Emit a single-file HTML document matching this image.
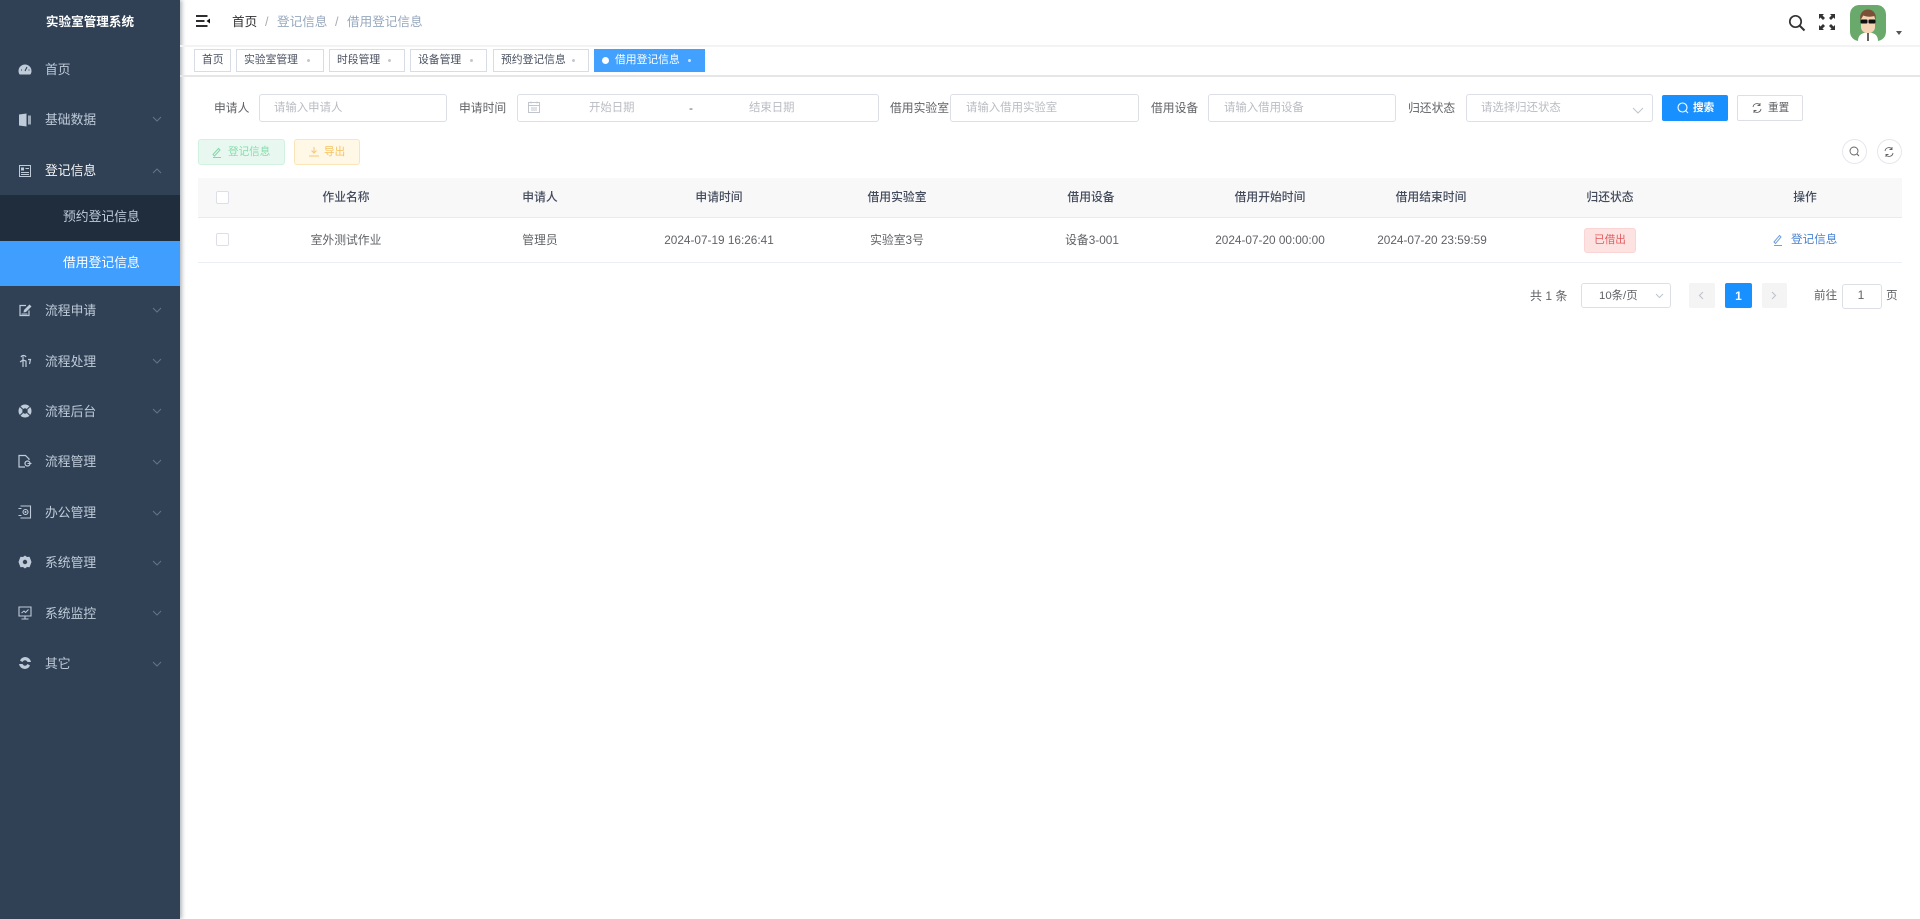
<!DOCTYPE html>
<html lang="zh-CN"><head><meta charset="utf-8"><title>实验室管理系统</title>
<style>
*{box-sizing:border-box}
html,body{margin:0;padding:0;width:1920px;height:919px;overflow:hidden;background:#fff;font-family:"Liberation Sans","Noto Sans CJK SC",sans-serif;font-size:12px;color:#606266}
.a,.t,.c,svg.i{position:absolute}
.t,.c{white-space:nowrap;line-height:18px;margin-top:-9px}
.c{transform:translateX(-50%)}
#side{left:0;top:0;width:180px;height:919px;background:#304156;box-shadow:2px 0 4px rgba(0,21,41,.3)}
.m{font-size:12.8px;color:#bfcbd9;left:45px}
.ic{left:18px;width:14px;height:14px;fill:#bfcbd9}
.ch{left:152px;width:10px;height:6px;fill:none;stroke:#64748a;stroke-width:1}
.box{position:absolute;border:1px solid #dcdfe6;border-radius:3px;background:#fff}
.tag{position:absolute;top:49px;height:23px;border:1px solid #d8dce5;background:#fff;color:#495060;font-size:10.8px;line-height:21px;padding-left:7px;white-space:nowrap}
.tag i{position:absolute;right:13px;top:9px;width:3px;height:3px;border-radius:50%;background:#c4c8ce}
.ph{color:#b9bcc3;font-size:11.4px}
.lb{color:#606266;font-size:11.8px}
.th{font-size:11.8px;color:#434b5c;font-weight:500}
.td{font-size:11.8px;color:#606266}
</style></head><body>

<div class="a" id="side"></div>
<div class="c" style="left:90px;top:22px;font-size:12.6px;font-weight:700;color:#fff">实验室管理系统</div>
<div class="a" style="left:0;top:195px;width:180px;height:46px;background:#1f2d3d"></div>
<div class="a" style="left:0;top:241px;width:180px;height:45px;background:#409eff"></div>

<div class="t m" style="top:70px">首页</div>
<div class="t m" style="top:120px">基础数据</div>
<div class="t m" style="top:171px;color:#f4f4f5">登记信息</div>
<div class="t m" style="top:217px;left:63px">预约登记信息</div>
<div class="t m" style="top:263px;left:63px;color:#fff">借用登记信息</div>
<div class="t m" style="top:311px">流程申请</div>
<div class="t m" style="top:362px">流程处理</div>
<div class="t m" style="top:412px">流程后台</div>
<div class="t m" style="top:462px">流程管理</div>
<div class="t m" style="top:513px">办公管理</div>
<div class="t m" style="top:563px">系统管理</div>
<div class="t m" style="top:614px">系统监控</div>
<div class="t m" style="top:664px">其它</div>

<!-- menu icons -->
<svg class="i ic" style="top:63px" viewBox="0 0 14 14"><path d="M7 1.500A6.500 6.500 0 0 0 .5 8c0 1.500.5 2.800 1.200 3.500h10.600C13 10.800 13.500 9.500 13.500 8A6.500 6.500 0 0 0 7 1.500z"/><path d="M7 8l2-4M3 7h1M10.500 7h1" stroke="#304156" stroke-width="1.100" fill="none"/></svg>
<svg class="i ic" style="top:113px" viewBox="0 0 14 14"><path d="M1 1.500l7.500-1V13.500L1 12.500z"/><path d="M10 2.500h3v9h-3zM10.500 5.500h2v.8h-2zM10.500 8h2v.8h-2z" opacity=".75"/></svg>
<svg class="i ic" style="top:164px" viewBox="0 0 14 14"><path d="M1.500 1.500h11v11h-11z" fill="none" stroke="#bfcbd9"/><path d="M3 3.500h3v3H3zM7.500 4h3.500v1H7.500zM3 8h8v1H3zM3 10h8v1H3z"/></svg>
<svg class="i ic" style="top:303px" viewBox="0 0 14 14"><path d="M11 7.500V12.500H2V2.500h6" fill="none" stroke="#bfcbd9" stroke-width="1.200"/><path d="M5.500 9.500l.5-2.500 5.500-5.500 2 2L8 9z"/><path d="M3.500 11h6" stroke="#bfcbd9"/></svg>
<svg class="i ic" style="top:354px" viewBox="0 0 14 14"><path d="M3 3c1-2 4-2 5 0M5 2.500V13M5 6L2 8M5 6l3 1v6M10 5.500h2.500L11.500 10" fill="none" stroke="#bfcbd9" stroke-width="1.200"/></svg>
<svg class="i ic" style="top:404px" viewBox="0 0 14 14"><path fill-rule="evenodd" d="M7 .5a6.500 6.500 0 1 0 0 13 6.500 6.500 0 0 0 0-13zm0 3.800a2.700 2.700 0 1 1 0 5.400 2.700 2.700 0 0 1 0-5.400z"/><path d="M2 2.500l3 3M12 2.500l-3 3M2 11.500l3-3M12 11.500l-3-3" stroke="#304156" stroke-width="1.100"/></svg>
<svg class="i ic" style="top:454px" viewBox="0 0 14 14"><path d="M7 13H1V1.500h6.500L11 5v1" fill="none" stroke="#bfcbd9" stroke-width="1.200"/><circle cx="9.500" cy="9.500" r="2.500" fill="none" stroke="#bfcbd9" stroke-width="1.200"/><path d="M9.500 9.500h4" stroke="#bfcbd9"/></svg>
<svg class="i ic" style="top:505px" viewBox="0 0 14 14"><path d="M2.500 1h10v12h-10M.5 3.500h3M.5 10.500h3" fill="none" stroke="#bfcbd9" stroke-width="1.100"/><circle cx="7.500" cy="7" r="2.500" fill="none" stroke="#bfcbd9" stroke-width="1.100"/><circle cx="7.500" cy="7" r="1"/></svg>
<svg class="i ic" style="top:555px" viewBox="0 0 14 14"><path fill-rule="evenodd" d="M7 .5l2 1.500 2.500-.2 1 2.400L13.500 7l-1 2.800-1 2.400L9 12 7 13.500 5 12l-2.500.2-1-2.400L.5 7l1-2.800 1-2.400L5 2zM7 4.800a2.200 2.200 0 1 0 0 4.400 2.200 2.200 0 0 0 0-4.400z"/></svg>
<svg class="i ic" style="top:606px" viewBox="0 0 14 14"><path d="M1 1h12v9H1zM7 10v3M3.500 13h7" fill="none" stroke="#bfcbd9" stroke-width="1.100"/><path d="M3.500 7l2.500-2 1.500 1.500L10.500 3.500" fill="none" stroke="#bfcbd9"/></svg>
<svg class="i ic" style="top:656px" viewBox="0 0 14 14"><path d="M7 1a6 6 0 0 1 6 5H9.500C9 5 8 4.300 7 4.300S5 5 4.500 6L2 4.500A6 6 0 0 1 7 1z"/><path d="M7 13a6 6 0 0 1-6-5h3.500c.5 1 1.500 1.700 2.500 1.700S9 9 9.500 8l2.500 1.500A6 6 0 0 1 7 13z"/></svg>

<!-- chevrons -->
<svg class="i ch" style="top:116px" viewBox="0 0 10 6"><path d="M1 1l4 4 4-4"/></svg>
<svg class="i ch" style="top:168px" viewBox="0 0 10 6"><path d="M1 5l4-4 4 4"/></svg>
<svg class="i ch" style="top:307px" viewBox="0 0 10 6"><path d="M1 1l4 4 4-4"/></svg>
<svg class="i ch" style="top:358px" viewBox="0 0 10 6"><path d="M1 1l4 4 4-4"/></svg>
<svg class="i ch" style="top:408px" viewBox="0 0 10 6"><path d="M1 1l4 4 4-4"/></svg>
<svg class="i ch" style="top:459px" viewBox="0 0 10 6"><path d="M1 1l4 4 4-4"/></svg>
<svg class="i ch" style="top:510px" viewBox="0 0 10 6"><path d="M1 1l4 4 4-4"/></svg>
<svg class="i ch" style="top:560px" viewBox="0 0 10 6"><path d="M1 1l4 4 4-4"/></svg>
<svg class="i ch" style="top:610px" viewBox="0 0 10 6"><path d="M1 1l4 4 4-4"/></svg>
<svg class="i ch" style="top:661px" viewBox="0 0 10 6"><path d="M1 1l4 4 4-4"/></svg>

<!-- top bar -->
<div class="a" style="left:180px;top:45px;width:1740px;height:2px;background:#f3f3f3"></div>
<svg class="i" style="left:196px;top:15px;width:14px;height:12px" viewBox="0 0 14 12"><path d="M0 1h11.500M0 6h8.500M0 11h11.500" stroke="#111" stroke-width="1.700"/><path d="M14 3.500v5L10.500 6z" fill="#111"/></svg>
<div class="t" style="left:232px;top:22px;font-size:12.6px;color:#303133">首页</div>
<div class="t" style="left:265px;top:22px;font-size:12.6px;color:#a8abb2">/</div>
<div class="t" style="left:277px;top:22px;font-size:12.6px;color:#97a8be">登记信息</div>
<div class="t" style="left:335px;top:22px;font-size:12.6px;color:#a8abb2">/</div>
<div class="t" style="left:347px;top:22px;font-size:12.6px;color:#97a8be">借用登记信息</div>

<svg class="i" style="left:1788px;top:14px;width:18px;height:18px" viewBox="0 0 18 18"><circle cx="7.500" cy="7.500" r="5.700" fill="none" stroke="#333" stroke-width="1.700"/><path d="M11.500 11.500l5 5" stroke="#333" stroke-width="2"/></svg>
<svg class="i" style="left:1819px;top:14px;width:16px;height:16px" viewBox="0 0 16 16" fill="#333"><path d="M0 0h5L3.500 1.500 6 4 4 6 1.500 3.500 0 5zM16 0v5l-1.500-1.500L12 6l-2-2 2.500-2.500L11 0zM0 16v-5l1.500 1.500L4 10l2 2-2.500 2.500L5 16zM16 16h-5l1.500-1.500L10 12l2-2 2.500 2.500L16 11z"/></svg>
<svg class="i" style="left:1850px;top:5px;width:36px;height:36px;border-radius:9px" viewBox="0 0 36 36"><rect width="36" height="36" rx="9" fill="#6aa96c"/><path d="M8 36c0-6 4-8.500 10-8.500S28 30 28 36z" fill="#fff"/><path d="M17.300 27.500h1.400V36h-1.400z" fill="#222"/><rect x="11" y="8" width="14" height="20" rx="6" fill="#f5d3b5"/><path d="M10.500 15c-1.500-7 3-10.500 7.500-10.500s9 3.500 7.500 10.500l-1.200-4c-3 1-8 1-11-.5z" fill="#7a5138"/><rect x="10.500" y="14.500" width="7" height="4" rx="1" fill="#111"/><rect x="18.500" y="14.500" width="7" height="4" rx="1" fill="#111"/></svg>
<svg class="i" style="left:1896px;top:31px;width:6px;height:4px" viewBox="0 0 6 4"><path d="M0 0h6L3 4z" fill="#555"/></svg>

<!-- tags -->
<div class="tag" style="left:194px;width:37px">首页</div>
<div class="tag" style="left:236px;width:88px">实验室管理<i></i></div>
<div class="tag" style="left:329px;width:76px">时段管理<i></i></div>
<div class="tag" style="left:410px;width:77px">设备管理<i></i></div>
<div class="tag" style="left:493px;width:96px">预约登记信息<i></i></div>
<div class="tag" style="left:594px;width:111px;background:#42a0ff;border-color:#42a0ff;color:#fff;padding-left:20px">借用登记信息<i style="background:#cfe6ff"></i><b style="position:absolute;left:7px;top:7px;width:7px;height:7px;border-radius:50%;background:#fff"></b></div>
<div class="a" style="left:180px;top:75px;width:1740px;height:2px;background:#e6e6e6"></div>

<!-- form -->
<div class="t lb" style="left:214px;top:108px">申请人</div>
<div class="box" style="left:259px;top:94px;width:188px;height:28px"></div>
<div class="t ph" style="left:274px;top:108px">请输入申请人</div>

<div class="t lb" style="left:459px;top:108px">申请时间</div>
<div class="box" style="left:517px;top:94px;width:362px;height:28px"></div>
<svg class="i" style="left:528px;top:101px;width:12px;height:12px" viewBox="0 0 12 12"><path d="M.5 1.500h11v10H.5zM.5 4.500h11M3 .5v2M9 .5v2M3 7h6M3 9h6" fill="none" stroke="#c0c4cc"/></svg>
<div class="t ph" style="left:589px;top:108px">开始日期</div>
<div class="t" style="left:689px;top:108px;color:#606266;font-size:12px">-</div>
<div class="t ph" style="left:749px;top:108px">结束日期</div>

<div class="t lb" style="left:890px;top:108px">借用实验室</div>
<div class="box" style="left:950px;top:94px;width:189px;height:28px"></div>
<div class="t ph" style="left:966px;top:108px">请输入借用实验室</div>

<div class="t lb" style="left:1151px;top:108px">借用设备</div>
<div class="box" style="left:1208px;top:94px;width:188px;height:28px"></div>
<div class="t ph" style="left:1224px;top:108px">请输入借用设备</div>

<div class="t lb" style="left:1408px;top:108px">归还状态</div>
<div class="box" style="left:1466px;top:94px;width:187px;height:28px"></div>
<div class="t ph" style="left:1481px;top:108px">请选择归还状态</div>
<svg class="i" style="left:1632px;top:107px;width:12px;height:7px" viewBox="0 0 12 7"><path d="M1 1l5 5 5-5" fill="none" stroke="#c0c4cc"/></svg>

<div class="a" style="left:1662px;top:95px;width:66px;height:26px;background:#1890ff;border-radius:2px"></div>
<svg class="i" style="left:1677px;top:102px;width:12px;height:12px" viewBox="0 0 12 12"><circle cx="5.500" cy="5.500" r="4.500" fill="none" stroke="#fff" stroke-width="1.100"/><path d="M9 9l2 2" stroke="#fff"/></svg>
<div class="t" style="left:1693px;top:108px;color:#fff;font-size:10.600px;font-weight:700">搜索</div>
<div class="a" style="left:1737px;top:95px;width:66px;height:26px;border:1px solid #dcdfe6;border-radius:2px"></div>
<svg class="i" style="left:1752px;top:103px;width:10px;height:10px" viewBox="0 0 10 10"><path d="M1 4a4 4 0 0 1 7-2M9 6a4 4 0 0 1-7 2M8 0v2.500H5.500M2 10V7.500h2.500" fill="none" stroke="#606266" stroke-width=".9"/></svg>
<div class="t" style="left:1768px;top:108px;color:#606266;font-size:10.600px">重置</div>

<!-- toolbar -->
<div class="a" style="left:198px;top:139px;width:87px;height:26px;background:#e8f8f0;border:1px solid #d1f2e0;border-radius:3px"></div>
<svg class="i" style="left:212px;top:147px;width:10px;height:11px" viewBox="0 0 10 11"><path d="M1 7.500L6.500 1.500l1.500 1.500-5.500 6zM1 10.500h8" fill="none" stroke="#7fd9a8"/></svg>
<div class="t" style="left:228px;top:152px;color:#85dcab;font-size:10.600px">登记信息</div>
<div class="a" style="left:294px;top:139px;width:66px;height:26px;background:#fff8e6;border:1px solid #fbe5b8;border-radius:3px"></div>
<svg class="i" style="left:309px;top:147px;width:10px;height:10px" viewBox="0 0 10 10"><path d="M5 0v6M2.500 3.500L5 6l2.500-2.500M0 9h10" fill="none" stroke="#f5c877"/></svg>
<div class="t" style="left:324px;top:152px;color:#f5c25f;font-size:10.600px">导出</div>

<div class="a" style="left:1842px;top:139px;width:25px;height:25px;border:1px solid #e4e7ed;border-radius:50%"></div>
<svg class="i" style="left:1849px;top:146px;width:11px;height:11px" viewBox="0 0 11 11"><circle cx="5" cy="5" r="4" fill="none" stroke="#606266" stroke-width=".9"/><path d="M8 8l2 2" stroke="#606266"/></svg>
<div class="a" style="left:1877px;top:139px;width:25px;height:25px;border:1px solid #e4e7ed;border-radius:50%"></div>
<svg class="i" style="left:1884px;top:147px;width:10px;height:10px" viewBox="0 0 10 10"><path d="M1 4a4 4 0 0 1 7-2M9 6a4 4 0 0 1-7 2M8 0v2.500H5.500M2 10V7.500h2.500" fill="none" stroke="#606266" stroke-width=".9"/></svg>

<!-- table -->
<div class="a" style="left:198px;top:178px;width:1704px;height:40px;background:#f8f8f9;border-bottom:1px solid #e8eaec"></div>
<div class="a" style="left:198px;top:262px;width:1704px;height:1px;background:#ebeef5"></div>
<div class="a" style="left:216px;top:191px;width:13px;height:13px;border:1px solid #dcdfe6;background:#fff;border-radius:2px"></div>
<div class="a" style="left:216px;top:233px;width:13px;height:13px;border:1px solid #dcdfe6;background:#fff;border-radius:2px"></div>

<div class="c th" style="left:346px;top:197px">作业名称</div>
<div class="c th" style="left:540px;top:197px">申请人</div>
<div class="c th" style="left:719px;top:197px">申请时间</div>
<div class="c th" style="left:897px;top:197px">借用实验室</div>
<div class="c th" style="left:1091px;top:197px">借用设备</div>
<div class="c th" style="left:1270px;top:197px">借用开始时间</div>
<div class="c th" style="left:1431px;top:197px">借用结束时间</div>
<div class="c th" style="left:1610px;top:197px">归还状态</div>
<div class="c th" style="left:1805px;top:197px">操作</div>

<div class="c td" style="left:346px;top:240px">室外测试作业</div>
<div class="c td" style="left:540px;top:240px">管理员</div>
<div class="c td" style="left:719px;top:240px">2024-07-19 16:26:41</div>
<div class="c td" style="left:897px;top:240px">实验室3号</div>
<div class="c td" style="left:1092px;top:240px">设备3-001</div>
<div class="c td" style="left:1270px;top:240px">2024-07-20 00:00:00</div>
<div class="c td" style="left:1432px;top:240px">2024-07-20 23:59:59</div>
<div class="a" style="left:1584px;top:228px;width:52px;height:25px;background:#fde2e2;border:1px solid #fbd5d5;border-radius:3px"></div>
<div class="c" style="left:1610px;top:240px;font-size:10.600px;color:#e2595b">已借出</div>
<svg class="i" style="left:1773px;top:234px;width:10px;height:12px" viewBox="0 0 10 12"><path d="M1 8L6.500 1.500l1.500 1.500L2.500 9.500zM1 11.500h8" fill="none" stroke="#6f9fe0"/></svg>
<div class="t" style="left:1791px;top:240px;font-size:11.600px;color:#4a84d4">登记信息</div>

<!-- pagination -->
<div class="t" style="left:1530px;top:296px;font-size:12px;color:#606266">共 1 条</div>
<div class="box" style="left:1581px;top:283px;width:90px;height:25px"></div>
<div class="t" style="left:1599px;top:296px;font-size:11.400px;color:#606266">10条/页</div>
<svg class="i" style="left:1655px;top:293px;width:9px;height:6px" viewBox="0 0 9 6"><path d="M1 1l3.500 3.500L8 1" fill="none" stroke="#c0c4cc"/></svg>
<div class="a" style="left:1689px;top:283px;width:26px;height:25px;background:#f4f4f5;border-radius:2px"></div>
<svg class="i" style="left:1698px;top:291px;width:6px;height:9px" viewBox="0 0 6 9"><path d="M5 1L1.500 4.500 5 8" fill="none" stroke="#c0c4cc" stroke-width="1.200"/></svg>
<div class="a" style="left:1725px;top:283px;width:27px;height:25px;background:#1890ff;border-radius:2px"></div>
<div class="c" style="left:1738.500px;top:296px;color:#fff;font-size:12px;font-weight:700">1</div>
<div class="a" style="left:1762px;top:283px;width:25px;height:25px;background:#f4f4f5;border-radius:2px"></div>
<svg class="i" style="left:1771px;top:291px;width:6px;height:9px" viewBox="0 0 6 9"><path d="M1 1l3.500 3.500L1 8" fill="none" stroke="#c0c4cc" stroke-width="1.200"/></svg>
<div class="t" style="left:1814px;top:296px;font-size:11.600px;color:#606266">前往</div>
<div class="box" style="left:1842px;top:284px;width:40px;height:25px"></div>
<div class="c" style="left:1861px;top:295px;font-size:12px;color:#606266">1</div>
<div class="t" style="left:1886px;top:296px;font-size:11.600px;color:#606266">页</div>

</body></html>
